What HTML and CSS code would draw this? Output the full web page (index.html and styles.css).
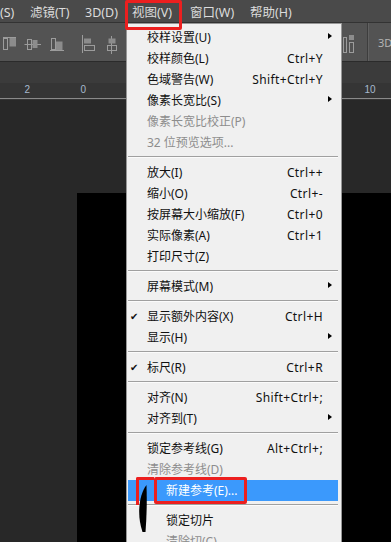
FILE: index.html
```html
<!DOCTYPE html>
<html lang="zh-CN">
<head>
    <meta charset="UTF-8">
    <title>视图菜单</title>
    <link rel="stylesheet" href="styles.css">
</head>
<body>
<div class="app">
    <!--菜单栏-->
    <div class="menubar">
        <span>(S)</span>
        <span>滤镜(T)</span>
        <span>3D(D)</span>
        <span>视图(V)</span>
        <span>窗口(W)</span>
        <span>帮助(H)</span>
    </div>

    <!--选项栏：对齐按钮-->
    <div class="toolbar">
        <svg class="align-icons" width="360" height="38" viewBox="0 23 360 38">
            <g fill="none" stroke="#9c9c9c" stroke-width="1">
                <path d="M3 37.5H16"/>
                <rect x="3.5" y="38.5" width="4" height="11"/>
                <path d="M24.5 44.5H41"/>
                <rect x="27.5" y="39.5" width="4" height="10"/>
                <rect x="51.5" y="38.5" width="4" height="11"/>
                <path d="M50 50.5H64"/>
                <path d="M82.5 35V53"/>
                <rect x="84.5" y="45.5" width="10" height="5"/>
                <path d="M111.5 36V54"/>
                <rect x="107.5" y="45.5" width="9" height="5"/>
                <rect x="343.5" y="37.5" width="3" height="15"/>
                <rect x="349.5" y="42.5" width="4" height="10"/>
            </g>
            <g fill="#8c8c8c">
                <rect x="9.5" y="38" width="6.5" height="8.5"/>
                <rect x="32.5" y="40" width="5" height="8"/>
                <rect x="56" y="41.5" width="6.5" height="8.5"/>
                <rect x="84" y="38.5" width="7" height="5"/>
                <rect x="108.5" y="38.5" width="7" height="5"/>
                <rect x="349" y="35" width="5" height="5"/>
            </g>
        </svg>
        <i class="tool-sep"></i>
        <span class="tool-3d">3D</span>
    </div>

    <!--文档标签-->
    <div class="tabs"></div>

    <!--标尺-->
    <div class="ruler">
        <svg id="ruler" width="391" height="17" viewBox="0 83 391 17"></svg>
    </div>

    <!--画布-->
    <div class="workspace">
        <div class="doc"></div>
    </div>

    <!--视图菜单-->
    <ul class="dropdown">
        <li class="item has-sub"><span class="chk"></span><span class="label">校样设置(U)</span><span class="key"></span><span class="sub"></span></li>
        <li class="item"><span class="chk"></span><span class="label">校样颜色(L)</span><span class="key">Ctrl+Y</span><span class="sub"></span></li>
        <li class="item"><span class="chk"></span><span class="label">色域警告(W)</span><span class="key">Shift+Ctrl+Y</span><span class="sub"></span></li>
        <li class="item has-sub"><span class="chk"></span><span class="label">像素长宽比(S)</span><span class="key"></span><span class="sub"></span></li>
        <li class="item off"><span class="chk"></span><span class="label">像素长宽比校正(P)</span><span class="key"></span><span class="sub"></span></li>
        <li class="item off"><span class="chk"></span><span class="label">32 位预览选项...</span><span class="key"></span><span class="sub"></span></li>
        <li class="sep"></li>
        <li class="item"><span class="chk"></span><span class="label">放大(I)</span><span class="key">Ctrl++</span><span class="sub"></span></li>
        <li class="item"><span class="chk"></span><span class="label">缩小(O)</span><span class="key">Ctrl+-</span><span class="sub"></span></li>
        <li class="item"><span class="chk"></span><span class="label">按屏幕大小缩放(F)</span><span class="key">Ctrl+0</span><span class="sub"></span></li>
        <li class="item"><span class="chk"></span><span class="label">实际像素(A)</span><span class="key">Ctrl+1</span><span class="sub"></span></li>
        <li class="item"><span class="chk"></span><span class="label">打印尺寸(Z)</span><span class="key"></span><span class="sub"></span></li>
        <li class="sep"></li>
        <li class="item has-sub"><span class="chk"></span><span class="label">屏幕模式(M)</span><span class="key"></span><span class="sub"></span></li>
        <li class="sep"></li>
        <li class="item"><span class="chk">✔</span><span class="label">显示额外内容(X)</span><span class="key">Ctrl+H</span><span class="sub"></span></li>
        <li class="item has-sub"><span class="chk"></span><span class="label">显示(H)</span><span class="key"></span><span class="sub"></span></li>
        <li class="sep"></li>
        <li class="item"><span class="chk">✔</span><span class="label">标尺(R)</span><span class="key">Ctrl+R</span><span class="sub"></span></li>
        <li class="sep"></li>
        <li class="item"><span class="chk"></span><span class="label">对齐(N)</span><span class="key">Shift+Ctrl+;</span><span class="sub"></span></li>
        <li class="item has-sub"><span class="chk"></span><span class="label">对齐到(T)</span><span class="key"></span><span class="sub"></span></li>
        <li class="sep"></li>
        <li class="item"><span class="chk"></span><span class="label">锁定参考线(G)</span><span class="key">Alt+Ctrl+;</span><span class="sub"></span></li>
        <li class="item off"><span class="chk"></span><span class="label">清除参考线(D)</span><span class="key"></span><span class="sub"></span></li>
        <li class="item active shift"><span class="chk"></span><span class="label">新建参考(E)...</span><span class="key"></span><span class="sub"></span></li>
        <li class="sep"></li>
        <li class="item shift"><span class="chk"></span><span class="label">锁定切片</span><span class="key"></span><span class="sub"></span></li>
        <li class="item off shift last"><span class="chk"></span><span class="label">清除切(C)</span><span class="key"></span><span class="sub"></span></li>
    </ul>

    <!--红框标注-->
    <div class="mark mark-view"></div>
    <div class="mark mark-edge"></div>
    <div class="mark mark-new"></div>
    <svg class="blot" width="16" height="58" viewBox="134 478 16 58">
        <path d="M146.5 485C140 493 136 513 142.5 532L145.5 532C146.8 516 147 500 146.5 485Z" fill="#000"/>
    </svg>
</div>

<script>
//生成标尺刻度，菜单盖住的数字不画
var ruler = document.getElementById('ruler');
var unit = 56.7;
var step = unit / 10;
var start = 20.7 - unit;
var marks = '<path d="M0 98.5H391" stroke="#8a8a8a"/>';
for (var i = 0; start + i * step < 391; i++) {
    var x = Math.round(start + i * step) + 0.5;
    var top = 95;
    if (i % 10 == 0) {
        top = 83;
        var n = Math.abs(2 * (i / 10 - 2));
        if (x > 0 && (x < 120 || x > 342)) {
            marks += '<text x="' + (x + 3) + '" y="93">' + n + '</text>';
        }
    } else if (i % 5 == 0) {
        top = 93;
    }
    marks += '<path d="M' + x + ' ' + top + 'V98" stroke="#8a8a8a"/>';
}
ruler.innerHTML = marks;
</script>
</body>
</html>
```

FILE: styles.css
```css
* {
    box-sizing: border-box;
}
body,
ul,
li {
    margin: 0;
    padding: 0;
    list-style: none;
}
body {
    width: 391px;
    height: 542px;
    overflow: hidden;
    background: #282828;
    font-family: "Noto Sans", "Noto Sans CJK SC", sans-serif;
}
.app {
    position: relative;
    width: 391px;
    height: 542px;
    overflow: hidden;
}

/* 菜单栏 */
.menubar {
    display: grid;
    grid-template-columns: 30px 55px 47px 58px 60px 1fr;
    height: 23px;
    padding-top: 3px;
    background: #4a4a4a;
    border-bottom: 1px solid #333;
    color: #dcdcdc;
    font-size: 12.5px;
    line-height: 19px;
    white-space: nowrap;
}

/* 选项栏 */
.toolbar {
    display: flex;
    align-items: center;
    height: 39px;
    background: #535353;
    border-bottom: 1px solid #2b2b2b;
}
.align-icons {
    display: block;
    flex: none;
}
.tool-sep {
    width: 2px;
    height: 38px;
    margin-left: 7px;
    border-left: 1px solid #3d3d3d;
    border-right: 1px solid #616161;
}
.tool-3d {
    margin-left: 9px;
    color: #b4b4b4;
    font-size: 11px;
}

.tabs {
    height: 21px;
    background: #3b3b3b;
}
.ruler {
    height: 17px;
    background: #353535;
}
.ruler svg {
    display: block;
    font-family: "Liberation Sans", sans-serif;
    font-size: 10px;
    fill: #a7b9cd;
}
.workspace {
    height: 442px;
    padding: 93px 0 0 77px;
    background: #282828;
}
.doc {
    height: 100%;
    background: #000;
}

/* 下拉菜单 */
.dropdown {
    position: absolute;
    left: 126px;
    top: 23px;
    width: 216px;
    height: 520px;
    padding: 3px 3px 0 1px;
    background: #f0f0f0;
    border: 1px solid #979797;
    border-bottom: none;
    color: #111;
    font-size: 12px;
}
.item {
    display: flex;
    align-items: center;
    height: 21px;
    line-height: 21px;
    white-space: nowrap;
}
.item.last {
    height: 14px;
    align-items: flex-start;
    overflow: hidden;
}
.item .chk {
    flex: none;
    width: 19px;
    padding-left: 2px;
    font-family: "DejaVu Sans", sans-serif;
    font-size: 10px;
}
.item .label {
    flex: 1;
}
.item .key {
    letter-spacing: 0.4px;
}
.item .sub {
    position: relative;
    flex: none;
    width: 15px;
    height: 21px;
}
.has-sub .sub::after {
    content: "";
    position: absolute;
    left: 5px;
    top: 6px;
    border-left: 4px solid #000;
    border-top: 3.5px solid transparent;
    border-bottom: 3.5px solid transparent;
}
.item.off {
    color: #8d8d8d;
}
.item.active {
    background: #3b99fc;
    color: #fff;
}
.item.shift .label {
    padding-left: 19px;
}
.sep {
    height: 9px;
    padding-top: 3px;
}
.sep::before {
    content: "";
    display: block;
    border-top: 1px solid #a0a0a0;
    border-bottom: 1px solid #fbfbfb;
}

/* 红框标注 */
.mark {
    position: absolute;
    border: 3px solid #ec1f1f;
    border-radius: 2px;
}
.mark-view {
    left: 125px;
    top: 0;
    width: 57px;
    height: 30px;
}
.mark-new {
    left: 154px;
    top: 477px;
    width: 93px;
    height: 27px;
}
.mark-edge {
    left: 136px;
    top: 477px;
    width: 18px;
    height: 28px;
    border-right: none;
    border-bottom: none;
    border-radius: 2px 0 0 0;
}
.blot {
    position: absolute;
    left: 134px;
    top: 478px;
}
```
